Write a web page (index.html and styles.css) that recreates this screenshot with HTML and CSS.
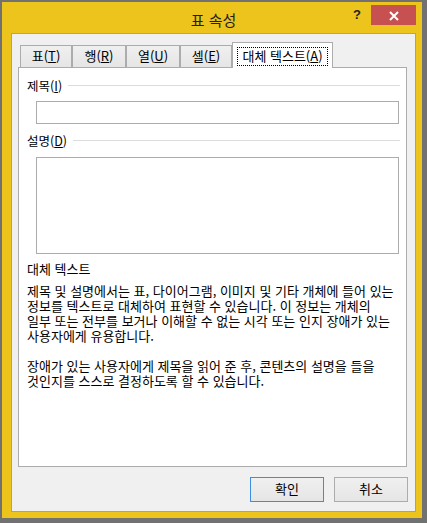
FILE: index.html
```html
<!DOCTYPE html>
<html lang="ko">
<head>
<meta charset="utf-8">
<title>표 속성</title>
<link rel="stylesheet" href="styles.css">
</head>
<body>
<div class="window">
  <div class="titlebar">
    <div class="title">표 속성</div>
    <div class="controls">
      <span class="help">?</span>
      <span class="close">
        <svg width="10" height="10" viewBox="0 0 10 10"><path d="M1 1 L9 9 M9 1 L1 9" stroke="#fff" stroke-width="2" fill="none"/></svg>
      </span>
    </div>
  </div>
  <div class="client">
    <div class="tabs">
      <div class="tab w52">표(<u>T</u>)</div>
      <div class="tab w54">행(<u>R</u>)</div>
      <div class="tab w54">열(<u>U</u>)</div>
      <div class="tab w52">셀(<u>E</u>)</div>
      <div class="tab active"><span class="focus">대체 텍스트(<u>A</u>)</span></div>
    </div>
    <div class="panel">
      <div class="group first"><span class="label">제목(<u>I</u>)</span><span class="rule"></span></div>
      <input class="field" type="text">
      <div class="group"><span class="label">설명(<u>D</u>)</span><span class="rule"></span></div>
      <textarea class="area"></textarea>
      <div class="heading">대체 텍스트</div>
      <p class="desc">제목 및 설명에서는 표, 다이어그램, 이미지 및 기타 개체에 들어 있는<br>정보를 텍스트로 대체하여 표현할 수 있습니다. 이 정보는 개체의<br>일부 또는 전부를 보거나 이해할 수 없는 시각 또는 인지 장애가 있는<br>사용자에게 유용합니다.</p>
      <p class="desc second">장애가 있는 사용자에게 제목을 읽어 준 후, 콘텐츠의 설명을 들을<br>것인지를 스스로 결정하도록 할 수 있습니다.</p>
    </div>
    <div class="buttons">
      <div class="btn default">확인</div>
      <div class="btn">취소</div>
    </div>
  </div>
</div>
</body>
</html>
```
FILE: styles.css
```css
* { box-sizing: border-box; }
html, body { margin: 0; padding: 0; }
body {
  width: 427px;
  height: 523px;
  overflow: hidden;
  background: #717171;
  font-family: "Noto Sans CJK KR", "Noto Sans", sans-serif;
  font-size: 13px;
  color: #000;
}
u { text-decoration: underline; text-underline-offset: 1px; }

.window {
  margin: 2px 0 0 2px;
  width: 420px;
  height: 516px;
  background: #ecc41c;
  padding: 0 6px 6px 9px;
  display: flex;
  flex-direction: column;
}
.titlebar {
  height: 31px;
  display: grid;
}
.title, .controls { grid-area: 1 / 1; }
.title {
  margin-top: 2px;
  line-height: 31px;
  height: 31px;
  text-align: center;
  font-size: 15px;
  color: #1e1e1e;
}
.controls {
  justify-self: end;
  display: flex;
  align-items: flex-start;
  margin-top: 3px;
}
.help {
  width: 24px;
  height: 20px;
  line-height: 20px;
  text-align: center;
  font-family: "Liberation Sans", sans-serif;
  font-weight: bold;
  font-size: 13px;
  color: #222;
  margin-right: 2px;
}
.close {
  width: 45px;
  height: 20px;
  background: #c75050;
  display: flex;
  align-items: center;
  justify-content: center;
}
.close svg { display: block; margin-top: 1px; }

.client {
  width: 405px;
  height: 479px;
  border: 1px solid #c9a520;
  background: #f0f0f0;
  padding: 8px 8px 9px 6px;
  display: flex;
  flex-direction: column;
}
.tabs {
  display: flex;
  align-items: flex-end;
  height: 25px;
  padding-left: 2px;
  position: relative;
  z-index: 2;
}
.tab {
  height: 22px;
  border: 1px solid #acacac;
  border-bottom: none;
  background: linear-gradient(#f0f0f0, #e5e5e5);
  text-align: center;
  line-height: 20px;
}
.w52 { width: 52px; }
.w54 { width: 54px; }
.tab.active {
  width: 101px;
  height: 26px;
  margin-bottom: -1px;
  background: #fff;
  padding: 4px 4px 0 4px;
}
.focus {
  display: block;
  height: 19px;
  border: 1px dotted #000;
  line-height: 16px;
  text-align: center;
  white-space: nowrap;
}

.panel {
  width: 389px;
  height: 400px;
  border: 1px solid #acacac;
  background: #fff;
  padding: 10px 6px 0 8px;
  position: relative;
  z-index: 1;
}
.group {
  display: flex;
  align-items: center;
  gap: 6px;
  height: 16px;
  line-height: 16px;
  margin-top: 9px;
  font-size: 12.5px;
}
.group.first { margin-top: 0; }
.rule {
  flex: 1;
  height: 1px;
  background: #dcdcdc;
  margin-top: -1px;
}
.field, .area {
  display: block;
  margin: 7px 0 0 9px;
  width: 363px;
  border: 1px solid #acacac;
  background: #fff;
  padding: 0;
  outline: none;
  font: inherit;
}
.field { height: 23px; }
.area { height: 97px; margin-top: 8px; resize: none; }
.heading {
  margin-top: 7px;
  height: 16px;
  line-height: 16px;
}
.desc {
  margin: 6px 0 0 0;
  line-height: 15px;
  white-space: nowrap;
}
.desc.second { margin-top: 15px; }

.buttons {
  margin-top: 10px;
  margin-right: -1px;
  display: flex;
  justify-content: flex-end;
  gap: 10px;
}
.btn {
  width: 74px;
  height: 25px;
  border: 1px solid #acacac;
  background: linear-gradient(#f0f0f0, #e5e5e5);
  text-align: center;
  line-height: 22px;
}
.btn.default { border-color: #3c8fe0; }
```
